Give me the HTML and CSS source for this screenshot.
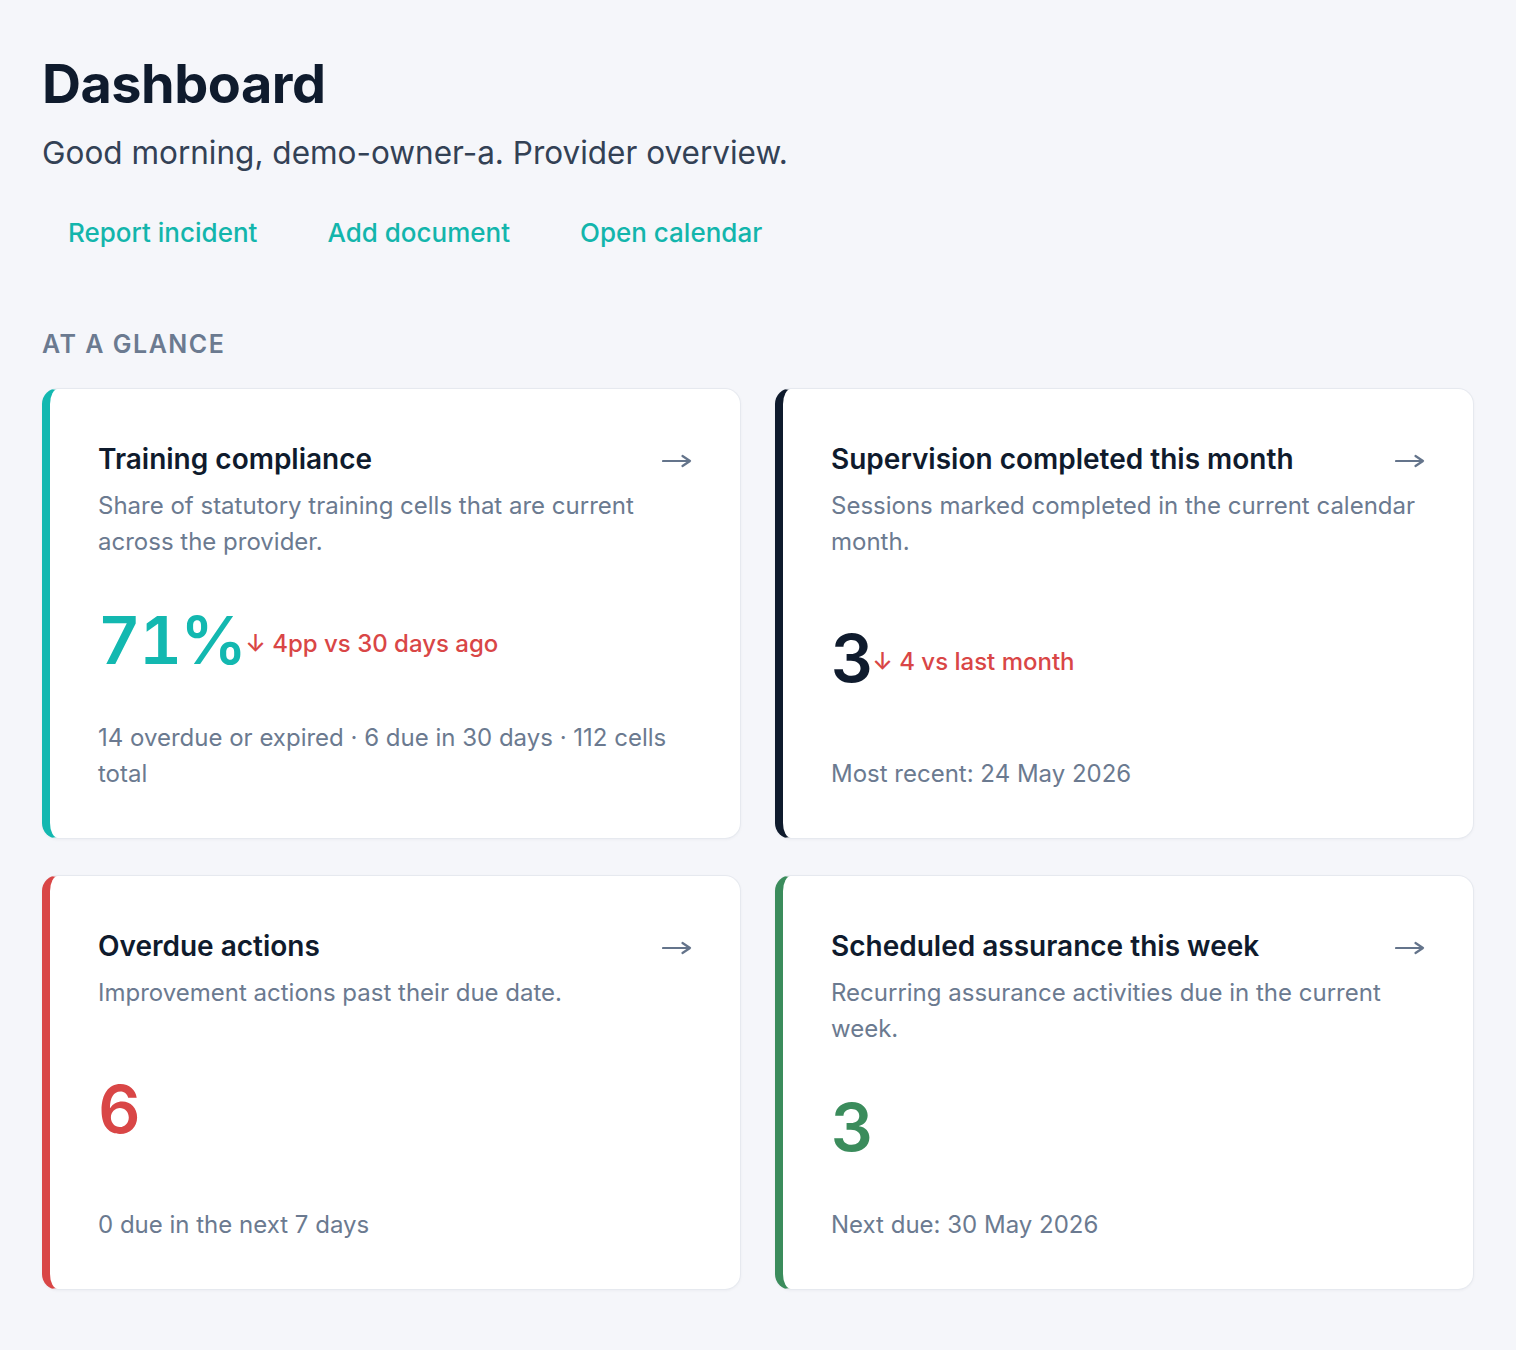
FILE: index.html
```html
<!DOCTYPE html>
<html>
<head>
    <meta charset='utf-8'>
    <title>Dashboard</title>
    <meta name='viewport' content='width=device-width, initial-scale=1'>
    <link rel="stylesheet" href="styles.css">
</head>
<body>
    <div class="page">
        <header class="page-head">
            <h1>Dashboard</h1>
            <p class="greeting">Good morning, demo-owner-a. Provider overview.</p>
            <nav class="quick-links">
                <a href="#">Report incident</a>
                <a href="#">Add document</a>
                <a href="#">Open calendar</a>
            </nav>
        </header>

        <section class="glance">
            <h2>At a glance</h2>
            <div class="cards">
                <a class="card card-teal" href="#">
                    <div class="card-head">
                        <div class="card-title">
                            <h3>Training compliance</h3>
                            <svg class="go" viewBox="0 0 30 14" width="30" height="14"><path d="M1 7H28M20.5 2L28 7L20.5 12"/></svg>
                        </div>
                        <p class="card-desc">Share of statutory training cells that are current across the provider.</p>
                    </div>
                    <div class="card-value">
                        <span class="num">71%</span>
                        <span class="delta">&darr; 4pp vs 30 days ago</span>
                    </div>
                    <p class="card-foot">14 overdue or expired · 6 due in 30 days · 112 cells total</p>
                </a>

                <a class="card card-dark" href="#">
                    <div class="card-head">
                        <div class="card-title">
                            <h3>Supervision completed this month</h3>
                            <svg class="go" viewBox="0 0 30 14" width="30" height="14"><path d="M1 7H28M20.5 2L28 7L20.5 12"/></svg>
                        </div>
                        <p class="card-desc">Sessions marked completed in the current calendar month.</p>
                    </div>
                    <div class="card-value">
                        <span class="num">3</span>
                        <span class="delta">&darr; 4 vs last month</span>
                    </div>
                    <p class="card-foot">Most recent: 24 May 2026</p>
                </a>

                <a class="card card-red" href="#">
                    <div class="card-head">
                        <div class="card-title">
                            <h3>Overdue actions</h3>
                            <svg class="go" viewBox="0 0 30 14" width="30" height="14"><path d="M1 7H28M20.5 2L28 7L20.5 12"/></svg>
                        </div>
                        <p class="card-desc">Improvement actions past their due date.</p>
                    </div>
                    <div class="card-value">
                        <span class="num">6</span>
                    </div>
                    <p class="card-foot">0 due in the next 7 days</p>
                </a>

                <a class="card card-green" href="#">
                    <div class="card-head">
                        <div class="card-title">
                            <h3>Scheduled assurance this week</h3>
                            <svg class="go" viewBox="0 0 30 14" width="30" height="14"><path d="M1 7H28M20.5 2L28 7L20.5 12"/></svg>
                        </div>
                        <p class="card-desc">Recurring assurance activities due in the current week.</p>
                    </div>
                    <div class="card-value">
                        <span class="num">3</span>
                    </div>
                    <p class="card-foot">Next due: 30 May 2026</p>
                </a>
            </div>
        </section>
    </div>
</body>
</html>
```

FILE: styles.css
```css
* {
    box-sizing: border-box;
}
body {
    margin: 0;
    background: #f5f6fa;
    color: #0f1b2d;
    font-family: Inter, "Noto Sans", sans-serif;
}
h1, h2, h3, p {
    margin: 0;
}
.page {
    padding: 52px 42px 60px;
}

/* header */
.page-head h1 {
    font-size: 54px;
    font-weight: 700;
    line-height: 64px;
    letter-spacing: -0.5px;
}
.greeting {
    margin-top: 17px;
    font-size: 31.5px;
    line-height: 40px;
    color: #334155;
}
.quick-links {
    display: flex;
    gap: 18px;
    margin-top: 37px;
}
.quick-links a {
    padding: 6px 26px;
    font-size: 26px;
    font-weight: 500;
    line-height: 34px;
    color: #13b5ac;
    text-decoration: none;
}

/* at a glance */
.glance {
    margin-top: 72px;
}
.glance h2 {
    font-size: 25px;
    font-weight: 600;
    line-height: 32px;
    letter-spacing: 1.5px;
    text-transform: uppercase;
    color: #6b7a90;
}
.cards {
    display: grid;
    grid-template-columns: 1fr 1fr;
    gap: 36px 34px;
    margin-top: 28px;
}
.card {
    display: flex;
    flex-direction: column;
    justify-content: space-between;
    gap: 40px;
    padding: 50px 48px 46px;
    background: #fff;
    border: 1px solid #e6e9ef;
    border-left: 8px solid #13b5ac;
    border-radius: 16px;
    box-shadow: 0 1px 3px rgba(15, 27, 45, 0.04);
    color: inherit;
    text-decoration: none;
}
.card-teal  { border-left-color: #13b8b0; }
.card-dark  { border-left-color: #0f1b2d; }
.card-red   { border-left-color: #d94646; }
.card-green { border-left-color: #3b8c5c; }

.card-title {
    display: flex;
    justify-content: space-between;
    align-items: center;
    gap: 16px;
}
.card-title h3 {
    font-size: 28px;
    font-weight: 600;
    line-height: 40px;
}
.go {
    flex-shrink: 0;
    margin-top: 4px;
    fill: none;
    stroke: #64748b;
    stroke-width: 2.2;
    stroke-linecap: round;
    stroke-linejoin: round;
}
.card-desc {
    margin-top: 9px;
    font-size: 24px;
    line-height: 36px;
    color: #6b7a90;
}
.card-value {
    display: flex;
    align-items: center;
    gap: 0;
}
.num {
    font-size: 66px;
    font-weight: 600;
    line-height: 80px;
    letter-spacing: -1.5px;
    font-variant-numeric: tabular-nums;
}
.card-teal .num  { color: #13b8b0; }
.card-red .num   { color: #d94646; }
.card-green .num { color: #3b8c5c; }
.delta {
    font-size: 24px;
    font-weight: 500;
    color: #d94646;
    padding-top: 6px;
}
.card-foot {
    font-size: 24px;
    line-height: 36px;
    color: #6b7a90;
}
```
